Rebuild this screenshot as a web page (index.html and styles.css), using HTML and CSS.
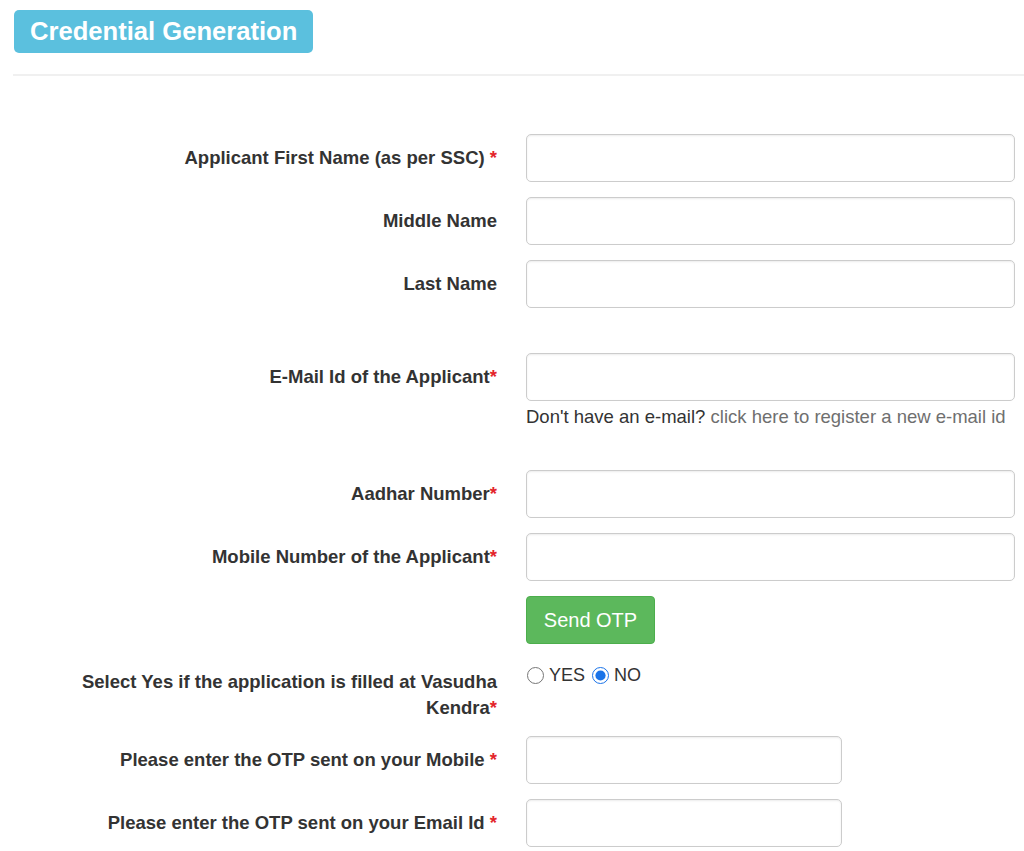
FILE: index.html
```html
<!DOCTYPE html>
<html lang="en">
<head>
    <meta charset="UTF-8">
    <meta name="viewport" content="width=device-width, initial-scale=1.0">
    <title>Credential Generation</title>
    <link rel="stylesheet" href="styles.css">
</head>
<body>
    <div class="page-head">
        <span class="title-badge">Credential Generation</span>
    </div>
    <hr class="divider">

    <form class="cred-form">
        <div class="form-row">
            <label for="first-name">Applicant First Name (as per SSC) <span class="req">*</span></label>
            <input type="text" id="first-name" class="field">
        </div>
        <div class="form-row">
            <label for="middle-name">Middle Name</label>
            <input type="text" id="middle-name" class="field">
        </div>
        <div class="form-row">
            <label for="last-name">Last Name</label>
            <input type="text" id="last-name" class="field">
        </div>

        <div class="form-row row-gap-top">
            <label for="email">E-Mail Id of the Applicant<span class="req">*</span></label>
            <div>
                <input type="text" id="email" class="field">
                <p class="help">Don't have an e-mail? <a href="#">click here to register a new e-mail id</a></p>
            </div>
        </div>

        <div class="form-row row-after-help">
            <label for="aadhar">Aadhar Number<span class="req">*</span></label>
            <input type="text" id="aadhar" class="field">
        </div>
        <div class="form-row">
            <label for="mobile">Mobile Number of the Applicant<span class="req">*</span></label>
            <input type="text" id="mobile" class="field">
        </div>
        <div class="form-row">
            <span></span>
            <div><button type="button" class="btn-otp">Send OTP</button></div>
        </div>

        <div class="form-row">
            <label class="label-wrap">Select Yes if the application is filled at Vasudha <span class="nowrap">Kendra<span class="req">*</span></span></label>
            <div class="radios">
                <label class="radio"><input type="radio" name="vasudha" value="yes"> YES</label>
                <label class="radio"><input type="radio" name="vasudha" value="no" checked> NO</label>
            </div>
        </div>

        <div class="form-row">
            <label for="otp-mobile">Please enter the OTP sent on your Mobile <span class="req">*</span></label>
            <input type="text" id="otp-mobile" class="field field-short">
        </div>
        <div class="form-row">
            <label for="otp-email">Please enter the OTP sent on your Email Id <span class="req">*</span></label>
            <input type="text" id="otp-email" class="field field-short">
        </div>
    </form>
</body>
</html>
```

FILE: styles.css
```css
body {
    margin: 0;
    background: #fff;
    color: #333;
    font-family: "Liberation Sans", Arial, sans-serif;
    font-size: 18.5px;
}

.page-head {
    padding: 10px 14px 0;
}

.title-badge {
    display: inline-block;
    height: 43px;
    line-height: 43px;
    padding: 0 16px;
    background-color: #5bc0de;
    color: #fff;
    font-size: 25.6px;
    font-weight: bold;
    border-radius: 5px;
}

.divider {
    margin: 21px 0 0 13px;
    border: 0;
    border-top: 2px solid #f0f0f0;
}

.cred-form {
    padding-top: 58px;
}

/* label column on the left, field column on the right */
.form-row {
    display: grid;
    grid-template-columns: 427px 489px;
    column-gap: 29px;
    padding-left: 70px;
    margin-bottom: 15px;
    align-items: start;
}

.form-row > label {
    text-align: right;
    font-weight: bold;
    line-height: 24px;
    padding-top: 12px;
}

.req {
    color: #e3242b;
}

.nowrap {
    white-space: nowrap;
}

.row-gap-top {
    margin-top: 45px;
}

.row-after-help {
    margin-top: 41px;
}

.form-row > .label-wrap {
    line-height: 26px;
    padding-top: 10px;
}

.field {
    display: block;
    box-sizing: border-box;
    width: 489px;
    height: 48px;
    margin: 0;
    border: 1px solid #ccc;
    border-radius: 5px;
    box-shadow: inset 0 1px 2px rgba(0, 0, 0, 0.08);
    font: inherit;
}

.field-short {
    width: 316px;
}

.help {
    margin: 4px 0 0;
    line-height: 24px;
    white-space: nowrap;
}

.help a {
    color: #6f6f6f;
    text-decoration: none;
}

.btn-otp {
    height: 48px;
    width: 129px;
    padding: 0;
    border: 1px solid #4cae4c;
    border-radius: 4px;
    background-color: #5cb85c;
    color: #fff;
    font-family: inherit;
    font-size: 20px;
}

.radios {
    display: flex;
    align-items: center;
    height: 32px;
}

.radio {
    display: flex;
    align-items: center;
    font-size: 18px;
    margin-right: 6px;
}

.radio input {
    width: 17px;
    height: 17px;
    margin: 0 5px 0 1px;
    accent-color: #1a73e8;
}
```
